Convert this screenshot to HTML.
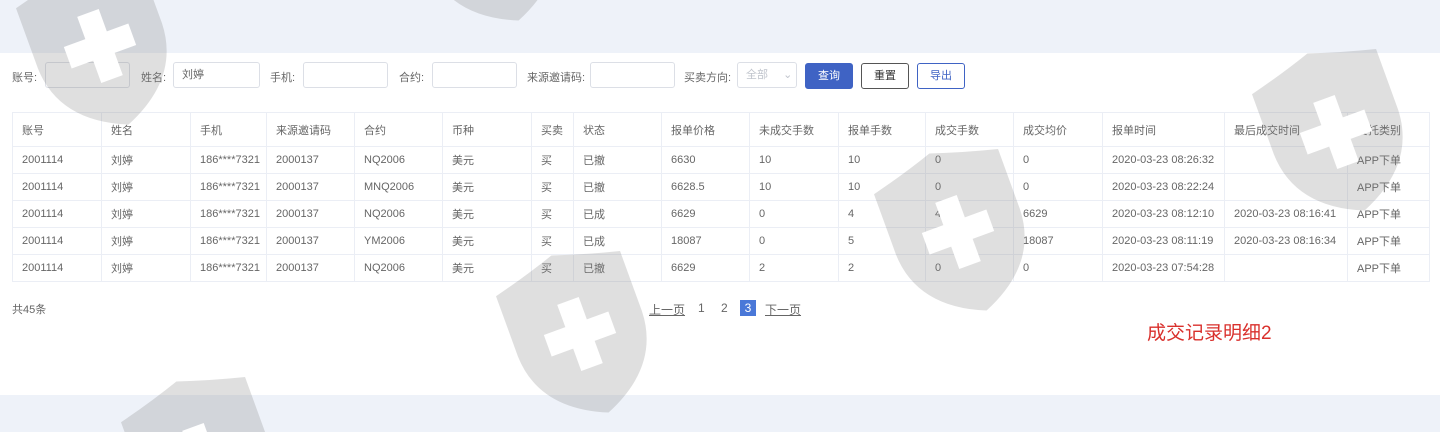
<!DOCTYPE html><html><head><meta charset="utf-8"><style>
html,body{margin:0;width:1440px;height:432px;overflow:hidden}
body{position:relative;background:#fff;font-family:"Liberation Sans","Noto Sans CJK SC",sans-serif;font-size:11px;color:#666}
.band{position:absolute;left:0;width:1440px;background:#eef2f9}
.lbl{position:absolute;top:69px;font-size:11px;color:#666}
.inp{position:absolute;top:62px;height:26px;border:1px solid #dcdfe6;border-radius:3px;box-sizing:border-box;background:#fff;font-size:11px;line-height:24px;padding-left:8px;color:#666}
.btn{position:absolute;top:63px;height:26px;box-sizing:border-box;border:1px solid #3f63c4;border-radius:3px;font-size:11px;line-height:24px;text-align:center;color:#3f63c4;background:#fff}
table{position:absolute;left:12px;top:112px;border-collapse:collapse;width:1417px;table-layout:fixed}
td{border:1px solid #ebeef5;height:26px;padding:0 0 0 9px;font-size:11px;color:#666;white-space:nowrap;overflow:hidden}
tr.h td{height:33px}
.pg{position:absolute;top:301px;font-size:12px;color:#666}
svg.w{position:absolute;left:0;top:0}
</style></head><body>
<div class="band" style="top:0;height:53px"></div>
<div class="band" style="top:395px;height:37px"></div>
<span class="lbl" style="left:12px">账号:</span><div class="inp" style="left:45px;width:85px"></div>
<span class="lbl" style="left:141px">姓名:</span><div class="inp" style="left:173px;width:87px">刘婷</div>
<span class="lbl" style="left:270px">手机:</span><div class="inp" style="left:303px;width:85px"></div>
<span class="lbl" style="left:399px">合约:</span><div class="inp" style="left:432px;width:85px"></div>
<span class="lbl" style="left:527px">来源邀请码:</span><div class="inp" style="left:590px;width:85px"></div>
<span class="lbl" style="left:684px">买卖方向:</span><div class="inp" style="left:737px;width:60px;color:#c0c4cc">全部 <span style="margin-left:12px">⌄</span></div>
<div class="btn" style="left:805px;width:48px;background:#3f63c4;color:#fff">查询</div>
<div class="btn" style="left:861px;width:48px;border-color:#555;color:#333">重置</div>
<div class="btn" style="left:917px;width:48px">导出</div>
<table>
<colgroup><col style="width:89px"><col style="width:89px"><col style="width:76px"><col style="width:88px"><col style="width:88px"><col style="width:89px"><col style="width:42px"><col style="width:88px"><col style="width:88px"><col style="width:89px"><col style="width:87px"><col style="width:88px"><col style="width:89px"><col style="width:122px"><col style="width:123px"><col style="width:82px"></colgroup>
<tr class="h"><td>账号</td><td>姓名</td><td>手机</td><td>来源邀请码</td><td>合约</td><td>币种</td><td>买卖</td><td>状态</td><td>报单价格</td><td>未成交手数</td><td>报单手数</td><td>成交手数</td><td>成交均价</td><td>报单时间</td><td>最后成交时间</td><td>委托类别</td></tr>
<tr><td>2001114</td><td>刘婷</td><td>186****7321</td><td>2000137</td><td>NQ2006</td><td>美元</td><td>买</td><td>已撤</td><td>6630</td><td>10</td><td>10</td><td>0</td><td>0</td><td>2020-03-23 08:26:32</td><td></td><td>APP下单</td></tr>
<tr><td>2001114</td><td>刘婷</td><td>186****7321</td><td>2000137</td><td>MNQ2006</td><td>美元</td><td>买</td><td>已撤</td><td>6628.5</td><td>10</td><td>10</td><td>0</td><td>0</td><td>2020-03-23 08:22:24</td><td></td><td>APP下单</td></tr>
<tr><td>2001114</td><td>刘婷</td><td>186****7321</td><td>2000137</td><td>NQ2006</td><td>美元</td><td>买</td><td>已成</td><td>6629</td><td>0</td><td>4</td><td>4</td><td>6629</td><td>2020-03-23 08:12:10</td><td>2020-03-23 08:16:41</td><td>APP下单</td></tr>
<tr><td>2001114</td><td>刘婷</td><td>186****7321</td><td>2000137</td><td>YM2006</td><td>美元</td><td>买</td><td>已成</td><td>18087</td><td>0</td><td>5</td><td>5</td><td>18087</td><td>2020-03-23 08:11:19</td><td>2020-03-23 08:16:34</td><td>APP下单</td></tr>
<tr><td>2001114</td><td>刘婷</td><td>186****7321</td><td>2000137</td><td>NQ2006</td><td>美元</td><td>买</td><td>已撤</td><td>6629</td><td>2</td><td>2</td><td>0</td><td>0</td><td>2020-03-23 07:54:28</td><td></td><td>APP下单</td></tr>
</table>
<span class="pg" style="left:12px;font-size:11px">共45条</span>
<span class="pg" style="left:649px;text-decoration:underline">上一页</span>
<span class="pg" style="left:698px">1</span>
<span class="pg" style="left:721px">2</span>
<span class="pg" style="left:740px;top:300px;width:16px;height:16px;background:#4a78d8;color:#fff;text-align:center;line-height:16px">3</span>
<span class="pg" style="left:765px;text-decoration:underline">下一页</span>
<span style="position:absolute;left:1147px;top:318px;font-size:19px;color:#d9302c">成交记录明细2</span>
<svg class="w" width="1440" height="432" viewBox="0 0 1440 432">
<defs><g id="s"><path d="M0 22 Q40 12 75 0 Q110 12 150 22 L150 95 Q148 160 75 190 Q2 160 0 95 Z" fill="rgba(128,128,128,0.25)"/><path d="M62 55 H88 V82 H114 V108 H88 V135 H62 V108 H36 V82 H62 Z" fill="#fff"/></g></defs>
<use href="#s" transform="translate(100,46) rotate(-20) scale(0.88) translate(-75,-95)"/>
<use href="#s" transform="translate(490,-58) rotate(-20) scale(0.88) translate(-75,-95)"/>
<use href="#s" transform="translate(580,334) rotate(-20) scale(0.88) translate(-75,-95)"/>
<use href="#s" transform="translate(958,232) rotate(-20) scale(0.88) translate(-75,-95)"/>
<use href="#s" transform="translate(1336,132) rotate(-20) scale(0.88) translate(-75,-95)"/>
<use href="#s" transform="translate(205,460) rotate(-20) scale(0.88) translate(-75,-95)"/>
</svg>
</body></html>
